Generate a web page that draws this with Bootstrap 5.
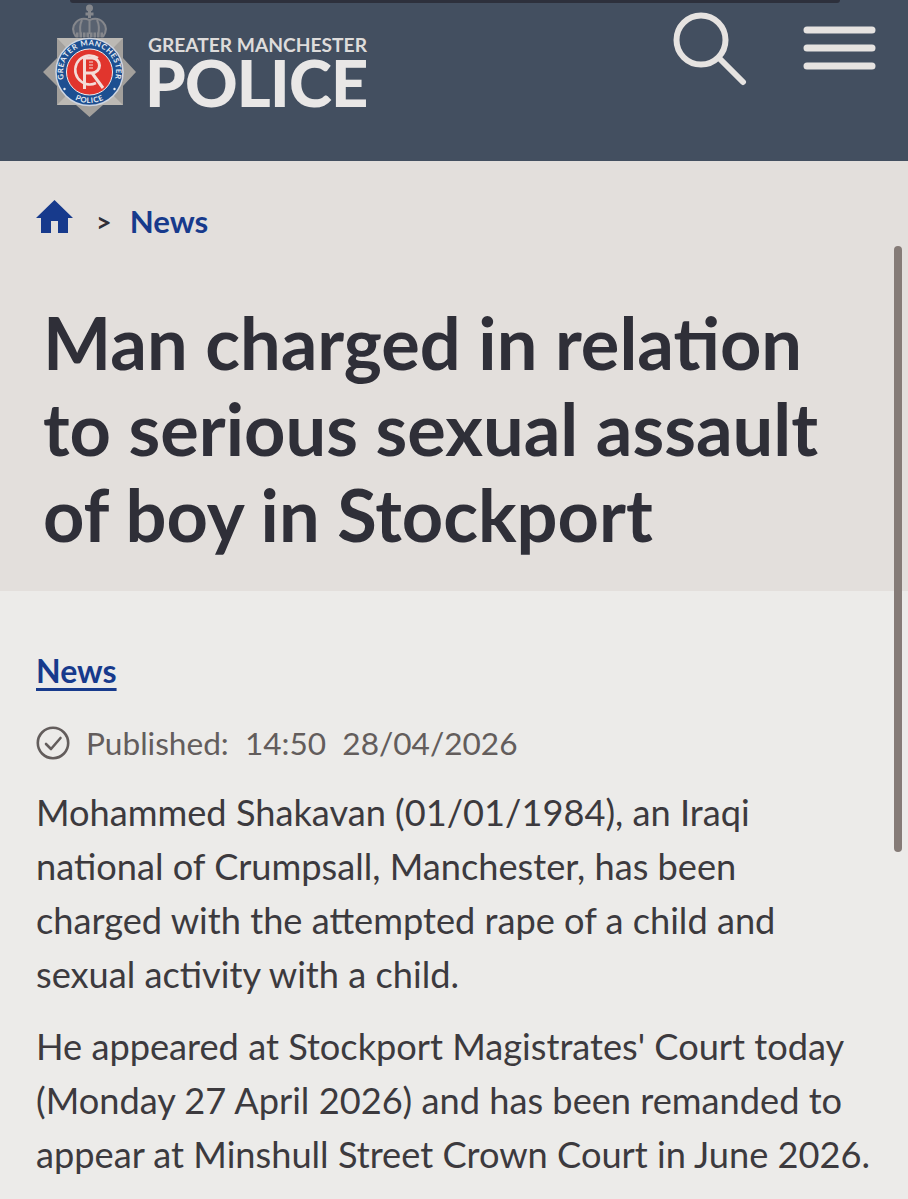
<!DOCTYPE html>
<html lang="en">
<head>
  <meta charset="UTF-8" />
  <meta name="viewport" content="width=device-width, initial-scale=1" />
  <title>Man charged - Greater Manchester Police</title>
  <link href="https://cdn.jsdelivr.net/npm/bootstrap@5.3.0/dist/css/bootstrap.min.css" rel="stylesheet">
  <style>
    html, body { height: 100%; }
    body { font-family: Lato, "Open Sans", sans-serif; background: #ecebe9; color: #2f2f38; overflow: hidden; position: relative; }
    .gmp-top { height: 161px; background: #434f60; padding: 0 32px 0 43px; }
    .gmp-notch { position: absolute; top: 0; left: 70px; width: 770px; height: 3px; background: #2d303c; border-radius: 0 0 8px 8px; }
    .gmp-badge { width: 93px; height: 118px; margin-top: 4px; }
    .gmp-brand { margin-left: 12px; margin-top: 34px; width: 222px; color: #e9e7e6; font-weight: 700; }
    .gmp-brand-sm { font-size: 19.2px; line-height: 22px; white-space: nowrap; color: #dedcdb; }
    .gmp-brand-lg { font-size: 65px; line-height: 52px; font-weight: 900; white-space: nowrap; letter-spacing: -.8px; margin-left: -3px; }
    .gmp-tools { gap: 56px; padding-top: 12px; }
    .gmp-menu { margin-top: 14px; }
    .gmp-crumbs { height: 430px; background: #e3dfdc; padding: 35px 36px 0; }
    .gmp-crumb-row { height: 50px; }
    .gmp-sep { margin: 0 18px 0 23px; font-size: 27px; line-height: 1; font-weight: 700; color: #2f2f38; }
    .gmp-link { color: #173a8c; font-weight: 700; font-size: 31.2px; }
    .gmp-title { font-size: 72.2px; line-height: 86px; font-weight: 700; color: #2f2f38; margin: 53px 0 0 7px; white-space: nowrap; }
    .gmp-main { padding: 57px 36px 0; }
    .gmp-tag { font-size: 32px; line-height: 46px; text-decoration: underline; text-underline-offset: 5px; text-decoration-thickness: 3px; display: inline-block; }
    .gmp-meta { color: #635d5c; font-size: 31.6px; line-height: 46px; margin-top: 26px; gap: 16px; white-space: pre; }
    .gmp-main p { font-size: 36.2px; line-height: 54px; color: #3c3a3e; margin: 0 0 18px; white-space: nowrap; }
    .gmp-body-start { padding-top: 19px; }
    .gmp-scroll { position: absolute; top: 246px; right: 6px; width: 8px; height: 606px; background: #857b77; border-radius: 4px; }
  </style>
</head>
<body>
  <div class="gmp-notch"></div>

  <!-- header -->
  <header class="gmp-top d-flex justify-content-between align-items-start">
    <div class="d-flex">
      <svg class="gmp-badge" viewBox="0 0 93 118" aria-label="Crest">
        <!-- crown -->
        <g fill="none" stroke="#85878c" stroke-width="2">
          <circle cx="46.500" cy="4" r="2.500" fill="#85878c" />
          <path d="M46.500 6 V14 M42.500 10 H50.500" stroke-width="3" />
          <path d="M33 33 C25 21 36 12 46.500 16 C57 12 68 21 60 33" fill="#596270" />
          <path d="M46.500 16 V30 M39 16 C36 22 37 27 38 31 M54 16 C57 22 56 27 55 31" />
          <path d="M33 31 H60" stroke-width="5" stroke-dasharray="2.500 1" />
        </g>
        <!-- star -->
        <path d="M46.500 113 L33 101 H14 V82 L0 68 L14 54 V34 H80 V54 L93 68 L80 82 V101 H60 Z" fill="#a3a09c" />
        <path d="M14 34 L46.500 68 L80 34 Z M14 101 L46.500 68 L80 101 Z" fill="#bcb9b4" />
        <circle cx="46.500" cy="68" r="33.500" fill="#1d4f91" stroke="#cfd6e2" stroke-width="1.500" />
        <circle cx="46.500" cy="68" r="23" fill="#e1352d" stroke="#eee" stroke-width="1" />
        <defs>
          <path id="ringTop" d="M46.500 94.500 A26.500 26.500 0 1 1 46.500 41.500 A26.500 26.500 0 1 1 46.500 94.500" />
          <path id="ringBot" d="M46.500 37 A31 31 0 1 0 46.500 99 A31 31 0 1 0 46.500 37" />
        </defs>
        <text font-family="Lato" font-weight="700" font-size="7.600" fill="#e8ecf2" letter-spacing=".6"><textPath href="#ringTop" startOffset="50%" text-anchor="middle">GREATER MANCHESTER</textPath></text>
        <text font-family="Lato" font-weight="700" font-size="7.600" fill="#e8ecf2" letter-spacing=".6"><textPath href="#ringBot" startOffset="50%" text-anchor="middle">POLICE</textPath></text>
        <circle cx="21.500" cy="85" r="1.200" fill="#e8ecf2" />
        <circle cx="71.500" cy="85" r="1.200" fill="#e8ecf2" />
        <!-- cypher -->
        <path d="M55 54 A14.500 14.500 0 1 0 53 79" fill="none" stroke="#f3dcd8" stroke-width="2.500" />
        <path d="M41.500 85 V54 H49 A7.500 7.500 0 0 1 49 69 H41.500 M49 69 L60 84" fill="none" stroke="#f3dcd8" stroke-width="3" />
        <path d="M46 58 H50 M46 61 H50 M46 64 H50" stroke="#f3dcd8" stroke-width="1" />
      </svg>
      <div class="gmp-brand">
        <div class="gmp-brand-sm">GREATER MANCHESTER</div>
        <div class="gmp-brand-lg">POLICE</div>
      </div>
    </div>
    <div class="gmp-tools d-flex">
      <svg width="74" height="74" viewBox="0 0 74 74" fill="none" stroke="#e6e3e1" stroke-linecap="round">
        <circle cx="28" cy="28" r="24.500" stroke-width="6" />
        <path d="M46 46 L70 70" stroke-width="6" />
      </svg>
      <svg class="gmp-menu" width="73" height="46" viewBox="0 0 73 46" fill="none" stroke="#e6e3e1" stroke-width="7" stroke-linecap="round">
        <path d="M4 4 H69 M4 22 H69 M4 40 H69" />
      </svg>
    </div>
  </header>

  <!-- breadcrumb and title -->
  <section class="gmp-crumbs">
    <div class="gmp-crumb-row d-flex align-items-center">
      <svg width="37" height="34" viewBox="0 0 37 34" fill="#173a8c" class="mb-2">
        <path d="M18.500 0 L37 18 H32 V33 H22 V21 H15 V33 H5 V18 H0 Z" />
      </svg>
      <span class="gmp-sep">&gt;</span>
      <a class="gmp-link text-decoration-none" href="#">News</a>
    </div>
    <h1 class="gmp-title">Man charged in relation<br>to serious sexual assault<br>of boy in Stockport</h1>
  </section>

  <!-- article -->
  <main class="gmp-main">
    <a class="gmp-link gmp-tag" href="#">News</a>
    <div class="gmp-meta d-flex align-items-center">
      <svg width="34" height="34" viewBox="0 0 34 34" fill="none" stroke="#635d5c" stroke-width="2.600">
        <circle cx="17" cy="17" r="15.200" />
        <path d="M10 18 L15 23 L24.500 12" stroke-linecap="round" stroke-linejoin="round" />
      </svg>
      <span>Published:  14:50  28/04/2026</span>
    </div>
    <div class="gmp-body-start">
      <p>Mohammed Shakavan (01/01/1984), an Iraqi<br>national of Crumpsall, Manchester, has been<br>charged with the attempted rape of a child and<br>sexual activity with a child.</p>
      <p>He appeared at Stockport Magistrates' Court today<br>(Monday 27 April 2026) and has been remanded to<br>appear at Minshull Street Crown Court in June 2026.</p>
    </div>
  </main>

  <div class="gmp-scroll"></div>
  <script src="https://cdn.jsdelivr.net/npm/bootstrap@5.3.0/dist/js/bootstrap.bundle.min.js"></script>
</body>
</html>
